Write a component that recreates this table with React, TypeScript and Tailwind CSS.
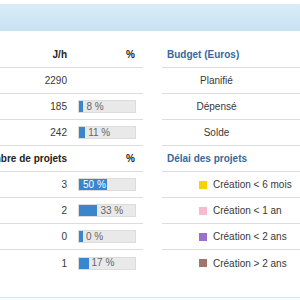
import React from "react";

type Row = { value?: string; pct?: number };

const jh: Row[] = [{ value: "2290" }, { value: "185", pct: 8 }, { value: "242", pct: 11 }];
const projets: Row[] = [
	{ value: "3", pct: 50 },
	{ value: "2", pct: 33 },
	{ value: "0", pct: 0 },
	{ value: "1", pct: 17 },
];

const legend = [
	{ color: "bg-[#f3d300]", label: "Création < 6 mois" },
	{ color: "bg-[#f5bccb]", label: "Création < 1 an" },
	{ color: "bg-[#9a70cc]", label: "Création < 2 ans" },
	{ color: "bg-[#9f766a]", label: "Création > 2 ans" },
];

const Bar: React.FC<{ pct: number }> = ({ pct }) => {
	const inside = pct >= 50;
	return (
		<div className="flex h-[13px] w-[58px] items-center overflow-hidden border border-[#dcdcdc] bg-[#e9e9e9] leading-none">
			<div
				className="flex h-full items-center bg-[#3a85cb] pl-[4px] text-white"
				style={{ width: `${pct}%` }}
			>
				{inside && `${pct} %`}
			</div>
			{!inside && <span className="pl-[3px] text-[#666]">{pct} %</span>}
		</div>
	);
};

const LeftHeader: React.FC<{ label: string }> = ({ label }) => (
	<div className="flex h-[26px] items-center border-b border-[#dddddd] font-bold text-[#222]">
		<div className="flex w-[67px] justify-end whitespace-nowrap">{label}</div>
		<div className="ml-[11px] w-[57px] text-right">%</div>
	</div>
);

const LeftRow: React.FC<{ row: Row; last?: boolean }> = ({ row, last }) => (
	<div className={`flex h-[26px] items-center ${last ? "" : "border-b border-[#dddddd]"}`}>
		<div className="w-[67px] text-right">{row.value}</div>
		<div className="ml-[11px]">{row.pct !== undefined && <Bar pct={row.pct} />}</div>
	</div>
);

const RightHeader: React.FC<{ label: string }> = ({ label }) => (
	<div className="flex h-[26px] items-center border-b border-[#dddddd] pl-[5px] font-bold text-[#36699b]">
		{label}
	</div>
);

const RightRow: React.FC<{ children: React.ReactNode; last?: boolean; center?: boolean }> = ({
	children,
	last,
	center,
}) => (
	<div className={`flex h-[26px] items-center ${last ? "" : "border-b border-[#dddddd]"}`}>
		{center ? <div className="w-[109px] text-center">{children}</div> : <div className="pl-[37px] flex items-center">{children}</div>}
	</div>
);

export default function App() {
	return (
		<div className="flex h-[300px] w-[300px] flex-col overflow-hidden bg-white font-['Liberation_Sans',Arial,sans-serif] text-[10px] text-[#383838]">
			<div className="mt-[4px] h-[27px] bg-gradient-to-b from-[#d9edf8] to-[#c8e2f2]" />
			<div className="flex pt-[11px]">
				<div className="w-[143px]">
					<LeftHeader label="J/h" />
					{jh.map((r) => (
						<LeftRow key={r.value} row={r} />
					))}
					<LeftHeader label="Nombre de projets" />
					{projets.map((r, i) => (
						<LeftRow key={r.value} row={r} last={i === projets.length - 1} />
					))}
				</div>
				<div className="ml-[19px] flex-1">
					<RightHeader label="Budget (Euros)" />
					<RightRow center>Planifié</RightRow>
					<RightRow center>Dépensé</RightRow>
					<RightRow center>Solde</RightRow>
					<RightHeader label="Délai des projets" />
					{legend.map((l, i) => (
						<RightRow key={l.label} last={i === legend.length - 1}>
							<span className={`mr-[6px] h-[8px] w-[8px] ${l.color}`} />
							{l.label}
						</RightRow>
					))}
				</div>
			</div>
			<div className="mt-auto h-[3px] border-t border-[#d4e8f4] bg-[#f6fbfe]" />
		</div>
	);
}
